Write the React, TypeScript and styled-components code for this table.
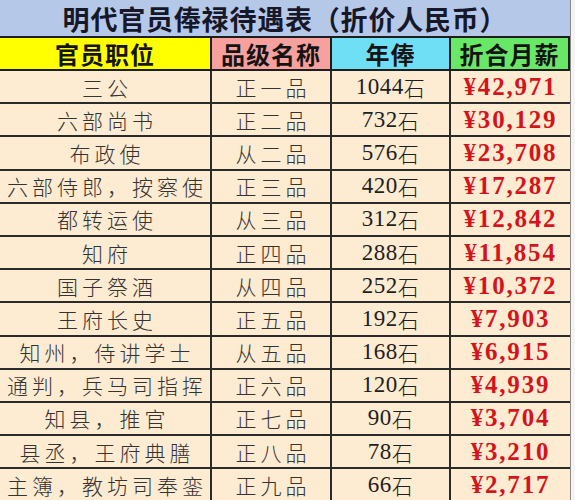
import { Fragment } from "react";
import styled, { createGlobalStyle } from "styled-components";

const GlobalStyle = createGlobalStyle`
  html, body {
    margin: 0;
    padding: 0;
    background: #f4f4f2;
  }
`;

type Row = {
  post: string;
  rank: string;
  grain: string;
  pay: string;
};

const rows: Row[] = [
  { post: "三公", rank: "正一品", grain: "1044", pay: "¥42,971" },
  { post: "六部尚书", rank: "正二品", grain: "732", pay: "¥30,129" },
  { post: "布政使", rank: "从二品", grain: "576", pay: "¥23,708" },
  { post: "六部侍郎，按察使", rank: "正三品", grain: "420", pay: "¥17,287" },
  { post: "都转运使", rank: "从三品", grain: "312", pay: "¥12,842" },
  { post: "知府", rank: "正四品", grain: "288", pay: "¥11,854" },
  { post: "国子祭酒", rank: "从四品", grain: "252", pay: "¥10,372" },
  { post: "王府长史", rank: "正五品", grain: "192", pay: "¥7,903" },
  { post: "知州，侍讲学士", rank: "从五品", grain: "168", pay: "¥6,915" },
  { post: "通判，兵马司指挥", rank: "正六品", grain: "120", pay: "¥4,939" },
  { post: "知县，推官", rank: "正七品", grain: "90", pay: "¥3,704" },
  { post: "县丞，王府典膳", rank: "正八品", grain: "78", pay: "¥3,210" },
  { post: "主簿，教坊司奉銮", rank: "正九品", grain: "66", pay: "¥2,717" },
];

const Sheet = styled.div`
  width: 570px;
  border-right: 1px solid #8a8a8a;
  font-family: "Noto Sans CJK SC", "Noto Sans", sans-serif;
`;

const Title = styled.div`
  height: 36px;
  display: flex;
  align-items: center;
  justify-content: center;
  background: #b6c8e8;
  border-bottom: 2px solid #1e1e1e;
  font-size: 27px;
  font-weight: 700;
  color: #16182a;
  letter-spacing: 0.8px;
`;

const Grid = styled.div`
  display: grid;
  grid-template-columns: 212px 120px 119px 119px;
`;

const HeadCell = styled.div<{ $bg: string }>`
  height: 31px;
  display: flex;
  align-items: center;
  justify-content: center;
  background: ${(p) => p.$bg};
  border-right: 2px solid #1e1e1e;
  border-bottom: 2px solid #1e1e1e;
  font-size: 24px;
  font-weight: 700;
  color: #141414;
  letter-spacing: 1px;
  &:last-child {
    border-right: none;
  }
`;

const Cell = styled.div`
  height: 31.2px;
  display: flex;
  align-items: center;
  justify-content: center;
  background: #fdebd2;
  border-right: 2px solid #2a2a2a;
  border-bottom: 2px solid #2a2a2a;
  color: #2c2c2c;
  white-space: nowrap;
  overflow: hidden;
`;

const PostCell = styled(Cell)`
  font-size: 21px;
  font-weight: 300;
  color: #333;
  letter-spacing: 4px;
  padding-left: 4px;
`;

const RankCell = styled(PostCell)``;

const GrainCell = styled(Cell)`
  font-family: "Liberation Serif", "Noto Sans CJK SC", serif;
  font-size: 23px;
  color: #1e1e1e;
  letter-spacing: 0.5px;
`;

const Stone = styled.span`
  font-family: "Noto Sans CJK SC", sans-serif;
  font-size: 21px;
  font-weight: 300;
`;

const PayCell = styled(Cell)`
  border-right: none;
  font-family: "Liberation Serif", serif;
  font-size: 25px;
  font-weight: 700;
  color: #d3141c;
  letter-spacing: 1.8px;
`;

export default function App() {
  return (
    <>
      <GlobalStyle />
      <Sheet>
        <Title>明代官员俸禄待遇表（折价人民币）</Title>
        <Grid>
          <HeadCell $bg="#ffff00">官员职位</HeadCell>
          <HeadCell $bg="#f7a19e">品级名称</HeadCell>
          <HeadCell $bg="#6fdff5">年俸</HeadCell>
          <HeadCell $bg="#68e866">折合月薪</HeadCell>
          {rows.map((r) => (
            <Fragment key={r.post}>
              <PostCell>{r.post}</PostCell>
              <RankCell>{r.rank}</RankCell>
              <GrainCell>
                {r.grain}
                <Stone>石</Stone>
              </GrainCell>
              <PayCell>{r.pay}</PayCell>
            </Fragment>
          ))}
        </Grid>
      </Sheet>
    </>
  );
}
